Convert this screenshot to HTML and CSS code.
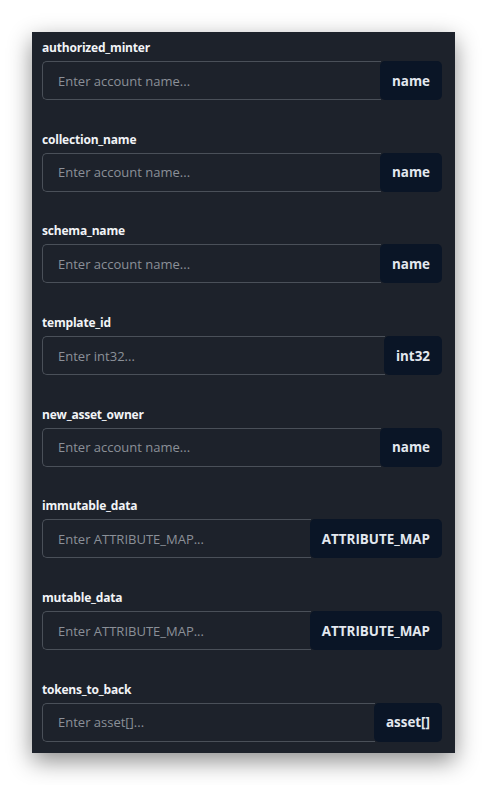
FILE: index.html
```html
<!DOCTYPE html>
<html>
<head>
<meta charset="utf-8">
<link rel="stylesheet" href="styles.css">
</head>
<body>
<div class="panel">
  <div class="field">
    <label class="label">authorized_minter</label>
    <div class="group"><input class="input" placeholder="Enter account name..."><span class="badge">name</span></div>
  </div>
  <div class="field">
    <label class="label">collection_name</label>
    <div class="group"><input class="input" placeholder="Enter account name..."><span class="badge">name</span></div>
  </div>
  <div class="field">
    <label class="label">schema_name</label>
    <div class="group"><input class="input" placeholder="Enter account name..."><span class="badge">name</span></div>
  </div>
  <div class="field">
    <label class="label">template_id</label>
    <div class="group"><input class="input" placeholder="Enter int32..."><span class="badge">int32</span></div>
  </div>
  <div class="field">
    <label class="label">new_asset_owner</label>
    <div class="group"><input class="input" placeholder="Enter account name..."><span class="badge">name</span></div>
  </div>
  <div class="field">
    <label class="label">immutable_data</label>
    <div class="group"><input class="input" placeholder="Enter ATTRIBUTE_MAP..."><span class="badge">ATTRIBUTE_MAP</span></div>
  </div>
  <div class="field">
    <label class="label">mutable_data</label>
    <div class="group"><input class="input" placeholder="Enter ATTRIBUTE_MAP..."><span class="badge">ATTRIBUTE_MAP</span></div>
  </div>
  <div class="field">
    <label class="label">tokens_to_back</label>
    <div class="group"><input class="input" placeholder="Enter asset[]..."><span class="badge">asset[]</span></div>
  </div>
</div>
</body>
</html>
```
FILE: styles.css
```css
html, body {
  margin: 0;
  padding: 0;
  background: #ffffff;
}
body {
  padding: 32px;
  font-family: "Open Sans", "Noto Sans", sans-serif;
}
.panel {
  width: 423px;
  box-sizing: border-box;
  background: #1d222b;
  padding: 6px 13px 11px 10px;
  box-shadow: 0 8px 22px rgba(0, 0, 0, 0.45);
  display: flex;
  flex-direction: column;
  gap: 29.7px;
}
.field {
  display: flex;
  flex-direction: column;
  gap: 3px;
}
.label {
  font-size: 12px;
  font-weight: 700;
  line-height: 20px;
  color: #f2f4f7;
  letter-spacing: -0.2px;
}
.group {
  display: flex;
  height: 39px;
}
.input {
  flex: 1;
  min-width: 0;
  box-sizing: border-box;
  height: 39px;
  margin: 0;
  background: #1d222b;
  border: 1px solid #4a5059;
  border-right: none;
  border-radius: 5px 0 0 5px;
  padding: 0 0 0 15px;
  font-family: "Open Sans", "Noto Sans", sans-serif;
  font-size: 13px;
  color: #e6e8eb;
  outline: none;
}
.input::placeholder {
  color: #8b9098;
}
.badge {
  display: flex;
  align-items: center;
  justify-content: center;
  padding: 0 12px;
  background: #0a1526;
  border-radius: 5px;
  color: #e3e8ef;
  font-size: 13.4px;
  font-weight: 700;
  white-space: nowrap;
  margin-left: -1px;
}
```
